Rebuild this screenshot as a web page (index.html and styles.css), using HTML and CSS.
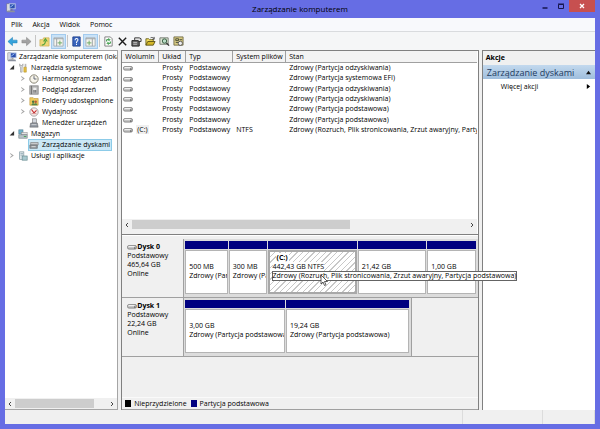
FILE: index.html
```
<!DOCTYPE html>
<html lang="pl">
<head>
    <meta charset="UTF-8">
    <meta name="viewport" content="width=device-width, initial-scale=1.0">
    <title>Zarządzanie komputerem</title>
    <link rel="stylesheet" href="styles.css">
</head>
<body>

    <!-- shared icons -->
    <svg class="sprite" aria-hidden="true">
        <symbol id="i-computer" viewBox="0 0 12 12">
            <rect x="1" y="1" width="4" height="9" fill="#d9dce4" stroke="#777" stroke-width=".6"/>
            <rect x="4" y="1" width="7" height="6" fill="#2c4fae" stroke="#c8d3e8"/>
            <path d="M5 5l4-3" stroke="#a9d0ff"/>
            <path d="M2 9h8l1 2H1z" fill="#8b919e"/>
            <path d="M7 7v2" stroke="#666"/>
        </symbol>
        <symbol id="i-tools" viewBox="0 0 12 12">
            <path d="M2 1v3l1 1v6h2V5l1-1V1L5 3H3z" fill="#d5d8dc" stroke="#8b8b8b" stroke-width=".6"/>
            <path d="M8 1h2v4H8z" fill="#b9b9b9"/>
            <path d="M7 5h3v6H7z" fill="#e8bf3c" stroke="#a98a2d" stroke-width=".6"/>
        </symbol>
        <symbol id="i-clock" viewBox="0 0 12 12">
            <circle cx="6" cy="6" r="5" fill="#f7f4ea" stroke="#8a8778" stroke-width="1.2"/>
            <path d="M6 2.500V6h3" fill="none" stroke="#4c5668"/>
        </symbol>
        <symbol id="i-events" viewBox="0 0 12 12">
            <rect x="1" y="1" width="10" height="10" fill="#b5b5b5" stroke="#888"/>
            <path d="M3 1v10M6 3v6M8 3v6" stroke="#6a6a6a"/>
            <rect x="5" y="3" width="4" height="3" fill="#ededed"/>
        </symbol>
        <symbol id="i-folder" viewBox="0 0 12 12">
            <path d="M1 2h4l1 1h5v8H1z" fill="#efcb5c" stroke="#bb9537" stroke-width=".7"/>
            <circle cx="5" cy="7" r="1.500" fill="#4a7740"/>
            <circle cx="8" cy="7" r="1.500" fill="#b25a38"/>
            <path d="M3 11c0-3 4-3 4 0zM6 11c0-3 4-3 4 0z" fill="#57864a"/>
        </symbol>
        <symbol id="i-perf" viewBox="0 0 12 12">
            <circle cx="6" cy="6" r="5" fill="#fbeceb" stroke="#999" stroke-width="1"/>
            <path d="M3 3l3 4 3-3" fill="none" stroke="#c42b2b" stroke-width="1.300"/>
            <path d="M3 8h6" stroke="#c98181"/>
        </symbol>
        <symbol id="i-devices" viewBox="0 0 12 12">
            <rect x="4" y="1" width="5" height="5" fill="#d3d7de" stroke="#777" stroke-width=".7"/>
            <path d="M2 6h8l1 5H1z" fill="#8d949e" stroke="#666" stroke-width=".6"/>
            <path d="M3 8h6" stroke="#ddd"/>
        </symbol>
        <symbol id="i-storage" viewBox="0 0 12 12">
            <rect x="1" y="1" width="5" height="5" fill="#6fb1c9" stroke="#557f94" stroke-width=".7"/>
            <rect x="4" y="4" width="7" height="3" fill="#e3e3e3" stroke="#888" stroke-width=".6"/>
            <rect x="1" y="7" width="10" height="4" fill="#b7c3c9" stroke="#69777d" stroke-width=".7"/>
            <path d="M7 9h3" stroke="#39a046"/>
        </symbol>
        <symbol id="i-disks" viewBox="0 0 12 12">
            <path d="M2 3h9v3H2z" fill="#c7c9cb" stroke="#777" stroke-width=".7"/>
            <path d="M1 6h9v4H1z" fill="#92979b" stroke="#5e6265" stroke-width=".7"/>
            <path d="M3 8h5" stroke="#e8e8e8"/>
        </symbol>
        <symbol id="i-services" viewBox="0 0 12 12">
            <rect x="2" y="1" width="5" height="9" fill="#dbe4e8" stroke="#7e959e" stroke-width=".8"/>
            <rect x="5" y="6" width="6" height="5" fill="#a8c9cf" stroke="#66898f" stroke-width=".8"/>
            <path d="M3 3h3M3 5h3" stroke="#87a1ad" stroke-width=".8"/>
        </symbol>
        <symbol id="i-volume" viewBox="0 0 10 6">
            <rect x=".5" y="1.500" width="9" height="3.600" rx="1.500" fill="#c5c5c5" stroke="#777" stroke-width=".8"/>
            <path d="M1.500 2.400h6" stroke="#f5f5f5"/>
            <path d="M7 4h1.500" stroke="#444"/>
        </symbol>
    </svg>

    <div class="window">
        <header class="titlebar">
            <svg class="app-icon"><use href="#i-computer"/></svg>
            <h1>Zarządzanie komputerem</h1>
            <div class="window-buttons">
                <button type="button" aria-label="Minimalizuj"><svg viewBox="0 0 8 8"><path d="M1.500 6h5" stroke="#16164e" stroke-width="1.500"/></svg></button>
                <button type="button" aria-label="Maksymalizuj"><svg viewBox="0 0 8 8"><path d="M1.500 2.500h5v4h-5zM1 2h6" fill="none" stroke="#16164e"/></svg></button>
                <button type="button" class="close" aria-label="Zamknij"><svg viewBox="0 0 8 8"><path d="M2 2l4 4M6 2L2 6" stroke="#fff" stroke-width="1.300"/></svg></button>
            </div>
        </header>

        <nav class="menubar">
            <button type="button">Plik</button>
            <button type="button">Akcja</button>
            <button type="button">Widok</button>
            <button type="button">Pomoc</button>
        </nav>

        <div class="toolbar">
            <button type="button" aria-label="Wstecz"><svg viewBox="0 0 12 12"><path d="M1 6l5-4.500v3h5v3H6v3z" fill="#36a3dc" stroke="#2583b8" stroke-width=".6"/></svg></button>
            <button type="button" aria-label="Dalej"><svg viewBox="0 0 12 12"><path d="M11 6L6 1.500v3H1v3h5v3z" fill="#a2a2a2" stroke="#888" stroke-width=".6"/></svg></button>
            <span class="separator"></span>
            <button type="button" aria-label="W górę"><svg viewBox="0 0 12 12"><path d="M1 4h3l1-2h6v9H1z" fill="#f0d878" stroke="#c9ab4b" stroke-width=".7"/><path d="M3 10c3 0 4-2 4-5M5 6l2-3 2 3" fill="none" stroke="#4da13b" stroke-width="1.200"/></svg></button>
            <button type="button" class="active" aria-label="Pokaż drzewo konsoli"><svg viewBox="0 0 12 12"><path d="M1 2h10v9H1z" fill="#f5f5ef" stroke="#9aa0a5" stroke-width=".8"/><path d="M1 3h10M4 3v8" stroke="#9aa0a5"/><path d="M7.500 5v5M5 7.500h5" stroke="#68a65f"/></svg></button>
            <span class="separator"></span>
            <button type="button" aria-label="Pomoc"><svg viewBox="0 0 12 12"><path d="M2 1h8v10H2z" fill="#3965bd" stroke="#23458f"/><path d="M4.500 4.500C4.500 2 8 2.500 7.500 4.500 7 6 6 5.500 6 7.500M6 8.500v1.200" fill="none" stroke="#fff" stroke-width="1.100"/></svg></button>
            <button type="button" class="active" aria-label="Pokaż okienko akcji"><svg viewBox="0 0 12 12"><path d="M1 2h10v9H1z" fill="#f5f5ef" stroke="#9aa0a5" stroke-width=".8"/><path d="M1 3h10M8 3v8" stroke="#9aa0a5"/><path d="M4.500 5v5M2 7.500h5" stroke="#68a65f"/></svg></button>
            <span class="separator"></span>
            <button type="button" aria-label="Odśwież"><svg viewBox="0 0 12 12"><path d="M2 1h6l2 2v8H2z" fill="#fff" stroke="#707070" stroke-width=".9"/><path d="M4 6V4h3M6 2.500L7.500 4 6 5.500M8 6v2H5M6 6.500L4.500 8 6 9.500" fill="none" stroke="#198b28"/></svg></button>
            <button type="button" aria-label="Usuń"><svg viewBox="0 0 12 12"><path d="M2 2l8 8M10 2l-8 8" stroke="#1c1c1c" stroke-width="1.500"/></svg></button>
            <button type="button" aria-label="Właściwości"><svg viewBox="0 0 12 12"><path d="M1 5h8v6H1z" fill="#666" stroke="#1e1e1e"/><path d="M4 2h5l2 1v3H8V5H4z" fill="#e1e1e1" stroke="#222" stroke-width=".9"/><path d="M2.500 7h4M2.500 9h4" stroke="#ddd" stroke-width=".8"/></svg></button>
            <button type="button" aria-label="Otwórz"><svg viewBox="0 0 12 12"><path d="M1 10V3h3l1 1h4v2" fill="#f4df60" stroke="#5f5714" stroke-width=".9"/><path d="M1 10l2-4h8l-2 4z" fill="#d3b728" stroke="#4e4710" stroke-width=".9"/><path d="M6 2c2-1 3 0 4 1M10 1v2.500H8" fill="none" stroke="#222" stroke-width=".8"/></svg></button>
            <button type="button" aria-label="Znajdź"><svg viewBox="0 0 12 12"><path d="M1 2h9v7H1z" fill="#dce6d4" stroke="#737a6e"/><circle cx="6" cy="5.500" r="2.400" fill="#b8dcc5" stroke="#30553a"/><path d="M8 7.500l3 3" stroke="#333" stroke-width="1.500"/></svg></button>
            <button type="button" aria-label="Ustawienia"><svg viewBox="0 0 12 12"><path d="M1 1h10v9H1z" fill="#d8cb84" stroke="#6b663f" stroke-width=".9"/><path d="M3 3h3v2H3zM7 4h3M3 7h3" fill="none" stroke="#464a35"/><circle cx="8" cy="8" r="2.300" fill="#eee" stroke="#555"/></svg></button>
        </div>

        <main class="panes">
            <aside class="tree-pane">
                <ul class="tree">
                    <li class="root"><svg class="icon"><use href="#i-computer"/></svg><span>Zarządzanie komputerem (loka</span></li>
                    <li class="level-1"><i class="arrow open"></i><svg class="icon"><use href="#i-tools"/></svg><span>Narzędzia systemowe</span></li>
                    <li class="level-2"><i class="arrow"></i><svg class="icon"><use href="#i-clock"/></svg><span>Harmonogram zadań</span></li>
                    <li class="level-2"><i class="arrow"></i><svg class="icon"><use href="#i-events"/></svg><span>Podgląd zdarzeń</span></li>
                    <li class="level-2"><i class="arrow"></i><svg class="icon"><use href="#i-folder"/></svg><span>Foldery udostępnione</span></li>
                    <li class="level-2"><i class="arrow"></i><svg class="icon"><use href="#i-perf"/></svg><span>Wydajność</span></li>
                    <li class="level-2"><i class="arrow none"></i><svg class="icon"><use href="#i-devices"/></svg><span>Menedżer urządzeń</span></li>
                    <li class="level-1"><i class="arrow open"></i><svg class="icon"><use href="#i-storage"/></svg><span>Magazyn</span></li>
                    <li class="level-2"><i class="arrow none"></i><span class="selected"><svg class="icon"><use href="#i-disks"/></svg><span>Zarządzanie dyskami</span></span></li>
                    <li class="level-1"><i class="arrow"></i><svg class="icon"><use href="#i-services"/></svg><span>Usługi i aplikacje</span></li>
                </ul>
                <div class="scrollbar">
                    <svg viewBox="0 0 6 6"><path d="M4 1L2 3l2 2" /></svg>
                    <div class="track"><div class="thumb tree-thumb"></div></div>
                    <svg viewBox="0 0 6 6"><path d="M2 1l2 2-2 2" /></svg>
                </div>
            </aside>

            <section class="disk-pane">
                <div class="volumes">
                    <table>
                        <colgroup>
                            <col class="col-volume"><col class="col-layout"><col class="col-type"><col class="col-fs"><col>
                        </colgroup>
                        <thead>
                            <tr><th>Wolumin</th><th>Układ</th><th>Typ</th><th>System plików</th><th>Stan</th></tr>
                        </thead>
                        <tbody>
                            <tr><td><svg class="volume"><use href="#i-volume"/></svg></td><td>Prosty</td><td>Podstawowy</td><td></td><td>Zdrowy (Partycja odzyskiwania)</td></tr>
                            <tr><td><svg class="volume"><use href="#i-volume"/></svg></td><td>Prosty</td><td>Podstawowy</td><td></td><td>Zdrowy (Partycja systemowa EFI)</td></tr>
                            <tr><td><svg class="volume"><use href="#i-volume"/></svg></td><td>Prosty</td><td>Podstawowy</td><td></td><td>Zdrowy (Partycja odzyskiwania)</td></tr>
                            <tr><td><svg class="volume"><use href="#i-volume"/></svg></td><td>Prosty</td><td>Podstawowy</td><td></td><td>Zdrowy (Partycja odzyskiwania)</td></tr>
                            <tr><td><svg class="volume"><use href="#i-volume"/></svg></td><td>Prosty</td><td>Podstawowy</td><td></td><td>Zdrowy (Partycja podstawowa)</td></tr>
                            <tr><td><svg class="volume"><use href="#i-volume"/></svg></td><td>Prosty</td><td>Podstawowy</td><td></td><td>Zdrowy (Partycja podstawowa)</td></tr>
                            <tr><td><svg class="volume"><use href="#i-volume"/></svg><span class="drive">(C:)</span></td><td>Prosty</td><td>Podstawowy</td><td>NTFS</td><td>Zdrowy (Rozruch, Plik stronicowania, Zrzut awaryjny, Partycja podstawowa)</td></tr>
                        </tbody>
                    </table>
                    <div class="scrollbar">
                        <svg viewBox="0 0 6 6"><path d="M4 1L2 3l2 2" /></svg>
                        <div class="track"><div class="thumb list-thumb"></div></div>
                        <svg viewBox="0 0 6 6"><path d="M2 1l2 2-2 2" /></svg>
                    </div>
                </div>

                <div class="disks">
                    <div class="disk">
                        <div class="disk-info">
                            <strong><svg class="volume"><use href="#i-volume"/></svg>Dysk 0</strong>
                            <p>Podstawowy</p>
                            <p>465,64 GB</p>
                            <p>Online</p>
                        </div>
                        <div class="partitions disk-0">
                            <div class="partition"><div class="body"><p>500 MB</p><p>Zdrowy (Partycja odzyskiwania)</p></div></div>
                            <div class="partition"><div class="body"><p>300 MB</p><p>Zdrowy (Partycja systemowa EFI)</p></div></div>
                            <div class="partition current">
                                <div class="body"><p class="name">(C:)</p><p>442,43 GB NTFS</p></div>
                                <div class="tooltip" role="tooltip">Zdrowy (Rozruch, Plik stronicowania, Zrzut awaryjny, Partycja podstawowa)</div>
                                <svg class="cursor" viewBox="0 0 8 12"><path d="M1 1v9l2-2 1.500 3.500 1.500-.7L4.500 7.500H7.500z" fill="#fff" stroke="#333" stroke-width=".8"/></svg>
                            </div>
                            <div class="partition"><div class="body"><p>21,42 GB</p><p>&nbsp;</p></div></div>
                            <div class="partition"><div class="body"><p>1,00 GB</p><p>&nbsp;</p></div></div>
                        </div>
                    </div>
                    <div class="disk">
                        <div class="disk-info">
                            <strong><svg class="volume"><use href="#i-volume"/></svg>Dysk 1</strong>
                            <p>Podstawowy</p>
                            <p>22,24 GB</p>
                            <p>Online</p>
                        </div>
                        <div class="partitions disk-1">
                            <div class="partition"><div class="body"><p>3,00 GB</p><p>Zdrowy (Partycja podstawowa)</p></div></div>
                            <div class="partition"><div class="body"><p>19,24 GB</p><p>Zdrowy (Partycja podstawowa)</p></div></div>
                        </div>
                    </div>
                </div>

                <div class="legend">
                    <span><i class="swatch unallocated"></i>Nieprzydzielone</span>
                    <span><i class="swatch primary"></i>Partycja podstawowa</span>
                </div>
            </section>

            <aside class="actions-pane">
                <h2>Akcje</h2>
                <button type="button" class="section">Zarządzanie dyskami<svg viewBox="0 0 6 6"><path d="M0 5l3-4 3 4z"/></svg></button>
                <button type="button" class="more">Więcej akcji<svg viewBox="0 0 6 6"><path d="M1 0l4 3-4 3z"/></svg></button>
            </aside>
        </main>

        <footer class="statusbar"><span></span><span></span><span></span></footer>
    </div>

</body>
</html>
```
FILE: styles.css
```
:root {
    --frame: #666de4;
    --face: #f0f0f0;
    --line: #808080;
    --navy: #000080;
    --text: #000;
}

* { margin: 0; padding: 0; box-sizing: border-box; }

body {
    color: var(--text);
    font-family: "Open Sans", "Noto Sans", sans-serif;
    font-size: 7px;
    line-height: 9px;
}

button {
    border: 0;
    background: none;
    color: inherit;
    font: inherit;
}

svg { display: block; flex: none; }

.sprite { position: absolute; width: 0; height: 0; }

.window {
    display: flex;
    flex-direction: column;
    height: 100vh;
    padding: 0 5px 5px;
    background: var(--frame);
}

/* title bar */
.titlebar {
    display: grid;
    grid-template-columns: 1fr auto 1fr;
    height: 18px;
}

.app-icon { width: 10px; height: 10px; margin: 3px 1px; }

.titlebar h1 {
    font-size: 8px;
    font-weight: normal;
    line-height: 18px;
}

.window-buttons {
    display: flex;
    justify-content: flex-end;
    align-items: flex-start;
}

.window-buttons button {
    display: flex;
    justify-content: center;
    align-items: center;
    width: 16px;
    height: 12px;
}

.window-buttons .close { width: 26px; background: #c75050; }
.window-buttons svg { width: 8px; height: 8px; }

/* menu and toolbar */
.menubar {
    display: flex;
    gap: 10px;
    height: 14px;
    padding: 0 6px;
    background: #f8f9fc;
    border-bottom: 1px solid #d9dbde;
}

.toolbar {
    display: flex;
    align-items: center;
    gap: 1px;
    height: 18px;
    padding: 0 1px;
    background: #f5f6f7;
}

.toolbar button {
    display: flex;
    justify-content: center;
    align-items: center;
    width: 13px;
    height: 13px;
}

.toolbar svg { width: 11px; height: 11px; }
.toolbar .active { background: #c9e2f7; box-shadow: 0 0 0 1px #a3cbee; }

.separator {
    width: 1px;
    height: 12px;
    margin: 0 1px;
    background: #c5c5c5;
}

/* three panes */
.panes {
    display: grid;
    grid-template-columns: 19fr 60fr 19fr;
    gap: 3px;
    flex: 1;
    min-height: 0;
    background: var(--face);
}

.tree-pane {
    display: flex;
    flex-direction: column;
    min-width: 0;
    background: #fff;
    border-top: 1px solid #a5a5a5;
    border-right: 1px solid #a5a5a5;
    border-bottom: 1px solid #a5a5a5;
}

.tree { flex: 1; overflow: hidden; list-style: none; }

.tree li {
    display: flex;
    align-items: center;
    gap: 3px;
    height: 11px;
    white-space: nowrap;
}

.tree .root { gap: 2px; padding-left: 2px; }
.tree .level-1 { padding-left: 4px; }
.tree .level-2 { padding-left: 15px; }
.icon { width: 10px; height: 10px; }

.arrow {
    flex: none;
    width: 6px;
    height: 5px;
    background: #a5a5a5;
    clip-path: polygon(20% 0, 80% 50%, 20% 100%, 20% 80%, 50% 50%, 20% 20%);
}

.arrow.open { background: #333; clip-path: polygon(85% 0, 85% 90%, 10% 90%); }
.arrow.none { visibility: hidden; }

.selected {
    display: flex;
    align-items: center;
    gap: 3px;
    height: 10px;
    padding-right: 1px;
    background: #cbe8f6;
    box-shadow: 0 0 0 1px #8ccbe8;
}

.scrollbar {
    display: flex;
    align-items: center;
    height: 11px;
    background: var(--face);
}

.scrollbar svg { width: 6px; height: 6px; margin: 0 2px; }
.scrollbar path { fill: none; stroke: #444; }
.track { flex: 1; height: 9px; }
.thumb { height: 100%; background: #cdcdcd; }
.tree-thumb { width: 86%; }
.list-thumb { width: 65%; }

/* volume list */
.disk-pane {
    display: flex;
    flex-direction: column;
    min-width: 0;
    border-left: 1px solid var(--line);
    border-right: 1px solid var(--line);
}

.volumes {
    display: flex;
    flex-direction: column;
    justify-content: space-between;
    flex: 1;
    padding-right: 1px;
    overflow: hidden;
    background: #fff;
    border-top: 1px solid var(--line);
    border-bottom: 1px solid var(--line);
}

.volumes .scrollbar { height: 15px; padding-bottom: 4px; }

table {
    width: 100%;
    height: 84px;
    table-layout: fixed;
    border-collapse: separate;
    border-spacing: 0;
}

.col-volume { width: 37px; }
.col-layout { width: 27px; }
.col-type { width: 47px; }
.col-fs { width: 53px; }

th, td {
    height: 10px;
    padding: 0 3px;
    overflow: hidden;
    line-height: 10px;
    text-align: left;
    white-space: nowrap;
}

th {
    height: 12px;
    background: #f3f3f3;
    border-right: 1px solid #a0a0a0;
    border-bottom: 1px solid #a0a0a0;
    font-weight: normal;
}

th:last-child { border-right: 0; }
td:first-child { padding: 0 1px; }

.volume {
    display: inline-block;
    width: 10px;
    height: 6px;
    vertical-align: middle;
}

.drive { margin-left: 3px; padding: 0 1px; background: var(--face); }

/* disk map */
.disks { padding-top: 3px; border-top: 1px solid #fff; }

.disk {
    display: flex;
    height: 59px;
    border-bottom: 1px solid #a0a0a0;
}

.disk-info {
    flex: none;
    width: 62px;
    padding: 3px 5px;
    border-right: 1px solid #a0a0a0;
}

.disk-info strong { display: flex; align-items: center; }

.partitions {
    display: grid;
    gap: 1px;
    padding: 2px 2px 3px 1px;
    background: #dcdcdc;
}

.disk-0 { flex: 1; grid-template-columns: 43fr 38fr 90fr 69fr 49fr; }

.disk-1 {
    width: 64%;
    grid-template-columns: 100fr 123fr;
    border-right: 1px solid #a0a0a0;
}

.partition {
    display: flex;
    flex-direction: column;
    position: relative;
    min-width: 0;
    border-top: 8px solid var(--navy);
}

.body {
    display: flex;
    flex-direction: column;
    justify-content: center;
    flex: 1;
    margin-top: 1px;
    padding: 0 3px 2px;
    overflow: hidden;
    background: #fff;
    border: 1px solid #b4b4b4;
    white-space: nowrap;
}

.current .body {
    justify-content: flex-start;
    align-items: flex-start;
    padding-top: 1px;
    border: 2px solid #a8a8a8;
    background: repeating-linear-gradient(135deg, #fff 0 3px, #c8c8c8 3px 4px);
}

.current p { background: #fff; }
.current .name { margin-left: 3px; padding: 0 1px; font-weight: bold; }

.tooltip {
    position: absolute;
    top: 22px;
    left: 4px;
    z-index: 1;
    border: 1px solid #646464;
    background: #fff;
    line-height: 8px;
    white-space: nowrap;
}

.cursor {
    position: absolute;
    top: 25px;
    left: 52px;
    z-index: 2;
    width: 8px;
    height: 12px;
}

.legend {
    display: flex;
    align-items: center;
    gap: 4px;
    height: 13px;
    margin-top: 40px;
    padding: 0 3px;
    border-top: 1px solid #fafafa;
    border-bottom: 1px solid #a0a0a0;
}

.legend span { display: flex; align-items: center; gap: 3px; }
.swatch { width: 6px; height: 7px; }
.unallocated { background: #000; }
.primary { background: var(--navy); }

/* actions */
.actions-pane {
    display: flex;
    flex-direction: column;
    min-width: 0;
    background: #fff;
    border-top: 1px solid var(--line);
    border-left: 1px solid var(--line);
}

.actions-pane h2 {
    height: 14px;
    padding: 0 3px;
    background: var(--face);
    font-size: 7px;
    line-height: 14px;
}

.actions-pane button {
    display: flex;
    justify-content: space-between;
    align-items: center;
    height: 14px;
    padding: 0 4px;
}

.actions-pane svg { width: 5px; height: 5px; }
.actions-pane .section { background: linear-gradient(#c3d9ee, #9fbedd); color: #1d3a5f; font-size: 9px; }
.actions-pane .section svg { fill: #111; }
.actions-pane .more { padding-left: 18px; }

.statusbar {
    display: grid;
    grid-template-columns: 458fr 80fr 52fr;
    height: 14px;
    background: var(--face);
}

.statusbar span { border-right: 1px solid #dcdcdc; }
```
